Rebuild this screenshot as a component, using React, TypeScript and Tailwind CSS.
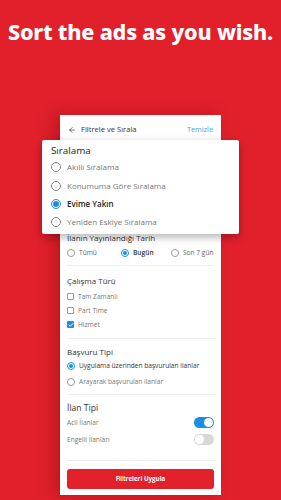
import { ArrowLeft, Check } from 'lucide-react';

const sortOptions = [
    { label: 'Akıllı Sıralama', active: false },
    { label: 'Konumuma Göre Sıralama', active: false },
    { label: 'Evime Yakın', active: true },
    { label: 'Yeniden Eskiye Sıralama', active: false },
];

const workTypes = [
    { label: 'Tam Zamanlı', checked: false },
    { label: 'Part Time', checked: false },
    { label: 'Hizmet', checked: true },
];

const Radio = ({ on, size = 'sm' }: { on: boolean; size?: 'sm' | 'lg' }) => (
    <span
        className={
            size === 'lg'
                ? `flex shrink-0 items-center justify-center w-[10px] h-[10px] rounded-full border ${on ? 'border-[#1a8ee6]' : 'border-[#8a8a8a]'}`
                : `flex shrink-0 items-center justify-center w-[8px] h-[8px] rounded-full border ${on ? 'border-[#1a8ee6]' : 'border-[#9a9a9a]'}`
        }
    >
        {on && <span className={size === 'lg' ? 'w-[6px] h-[6px] rounded-full bg-[#1a8ee6]' : 'w-[4px] h-[4px] rounded-full bg-[#1a8ee6]'} />}
    </span>
);

const Toggle = ({ on }: { on: boolean }) => (
    <span className={`flex items-center w-[20px] h-[11px] rounded-full px-[1px] ${on ? 'bg-[#1a8ee6] justify-end' : 'bg-[#d8d8d8] justify-start'}`}>
        <span className="w-[9px] h-[9px] rounded-full bg-white" />
    </span>
);

const App = () => {
    return (
        <div className="relative w-[281px] h-[500px] overflow-hidden bg-[#e1202c] font-['Open_Sans',sans-serif]">
            <h1 className="pt-[20px] text-center text-white font-extrabold text-[21.6px] leading-[24px] tracking-[-0.2px] whitespace-nowrap font-['Noto_Sans',sans-serif]">
                Sort the ads as you wish.
            </h1>

            {/* phone screen */}
            <div className="ml-[60px] mt-[71px] w-[161px] h-[380px] bg-white shadow-[-6px_0_14px_rgba(120,0,0,0.35)] flex flex-col">
                <div className="flex items-center h-[28px] px-[8px] pt-[1px]">
                    <ArrowLeft size={8} strokeWidth={2} className="text-[#333]" />
                    <span className="ml-[5px] text-[7.6px] text-[#333]">Filtrele ve Sırala</span>
                    <span className="ml-auto text-[7.3px] text-[#4aa6d6]">Temizle</span>
                </div>

                <div className="h-[90px]" />

                <div className="px-[7px] flex flex-col text-[#333]">
                    <p className="text-[8px] leading-[10px] font-medium whitespace-nowrap">İlanın Yayınlandığı Tarih</p>
                    <div className="flex items-center mt-[5px] h-[9px] text-[6.6px] text-[#666]">
                        <span className="flex items-center gap-[4px] w-[54px]"><Radio on={false} />Tümü</span>
                        <span className="flex items-center gap-[4px] w-[50px] text-[#333] font-semibold"><Radio on />Bugün</span>
                        <span className="flex items-center gap-[4px]"><Radio on={false} />Son 7 gün</span>
                    </div>
                    <div className="h-px bg-[#eee] mt-[8px]" />

                    <p className="mt-[9.5px] text-[8px] leading-[10px] font-medium">Çalışma Türü</p>
                    <div className="flex flex-col gap-[5px] mt-[6.5px] text-[6.6px] text-[#777]">
                        {workTypes.map((t) => (
                            <span key={t.label} className="flex items-center gap-[4px] h-[9px]">
                                <span className={`flex items-center justify-center w-[7px] h-[7px] rounded-[1px] ${t.checked ? 'bg-[#1a8ee6]' : 'border border-[#9a9a9a]'}`}>
                                    {t.checked && <Check size={6} strokeWidth={4} className="text-white" />}
                                </span>
                                {t.label}
                            </span>
                        ))}
                    </div>
                    <div className="h-px bg-[#eee] mt-[8.5px]" />

                    <p className="mt-[8.5px] text-[8px] leading-[10px] font-medium">Başvuru Tipi</p>
                    <div className="flex flex-col gap-[7px] mt-[4.5px] text-[6.6px]">
                        <span className="flex items-center gap-[4px] h-[9px] text-[#333] font-medium whitespace-nowrap"><Radio on />Uygulama üzerinden başvurulan ilanlar</span>
                        <span className="flex items-center gap-[4px] h-[9px] text-[#777]"><Radio on={false} />Arayarak başvurulan ilanlar</span>
                    </div>
                    <div className="h-px bg-[#eee] mt-[7.5px]" />

                    <p className="mt-[8px] text-[8.6px] leading-[11px] font-medium">İlan Tipi</p>
                    <div className="flex flex-col gap-[6px] mt-[3px] text-[6.6px] text-[#777]">
                        <span className="flex items-center justify-between h-[11px]">Acil İlanlar<Toggle on /></span>
                        <span className="flex items-center justify-between h-[11px]">Engelli İlanları<Toggle on={false} /></span>
                    </div>
                    <div className="h-px bg-[#eee] mt-[15px]" />

                    <button className="mt-[8px] h-[20px] w-full rounded-[3px] bg-[#e3212b] text-white text-[6.2px] font-bold">
                        Filtreleri Uygula
                    </button>
                </div>
            </div>

            {/* sort popup */}
            <div className="absolute left-[42px] top-[140px] w-[197px] h-[94px] bg-white rounded-[2px] shadow-[0_3px_8px_rgba(0,0,0,0.3)] px-[9px] pt-[4px]">
                <p className="text-[9.8px] leading-[13px] text-[#222]">Sıralama</p>
                <div className="flex flex-col mt-[1px]">
                    {sortOptions.map((o) => (
                        <span
                            key={o.label}
                            className={`flex items-center gap-[6px] h-[18.4px] text-[8px] ${o.active ? 'text-[#222] font-semibold' : 'text-[#777]'}`}
                        >
                            <Radio on={o.active} size="lg" />
                            {o.label}
                        </span>
                    ))}
                </div>
            </div>
        </div>
    );
};

export default App;
